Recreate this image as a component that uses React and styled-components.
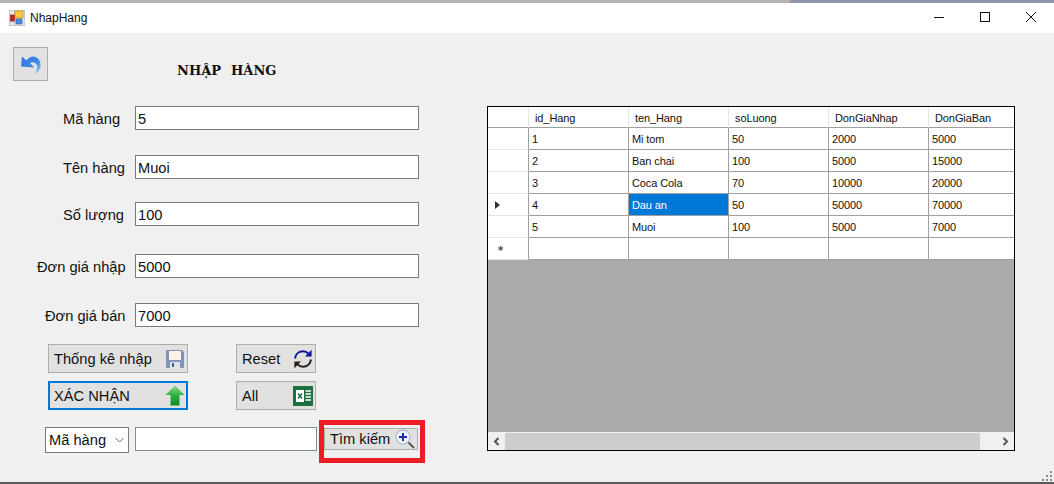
import React from "react";
import styled, { createGlobalStyle } from "styled-components";

const GlobalStyle = createGlobalStyle`
  html, body {
    margin: 0;
    padding: 0;
    background: #f0f0f0;
    overflow: hidden;
  }
  * { box-sizing: border-box; }
`;

const columns = ["id_Hang", "ten_Hang", "soLuong", "DonGiaNhap", "DonGiaBan"];
const rows = [
  ["1", "Mi tom", "50", "2000", "5000"],
  ["2", "Ban chai", "100", "5000", "15000"],
  ["3", "Coca Cola", "70", "10000", "20000"],
  ["4", "Dau an", "50", "50000", "70000"],
  ["5", "Muoi", "100", "5000", "7000"],
];
const fields = [
  { label: "Mã hàng", value: "5", left: 63, top: 0 },
  { label: "Tên hàng", value: "Muoi", left: 63, top: 25 },
  { label: "Số lượng", value: "100", left: 63, top: 23 },
  { label: "Đơn giá nhập", value: "5000", left: 37, top: 28 },
  { label: "Đơn giá bán", value: "7000", left: 45, top: 25 },
];

const AppIcon = () => (
  <svg width="16" height="16" viewBox="0 0 16 16">
    <rect x="0.5" y="0.5" width="15" height="15" fill="#e8e8e8" stroke="#c8c8c8" />
    <path d="M5.5 1 V15 M1 12 H15" stroke="#c8c8c8" />
    <rect x="1.5" y="5" width="4" height="6" fill="#d02020" stroke="#801010" strokeWidth="0.6" />
    <rect x="6" y="1" width="8" height="7" fill="#f8c840" stroke="#b08020" strokeWidth="0.6" />
    <rect x="7" y="9" width="6" height="5" fill="#5088e0" stroke="#2858a8" strokeWidth="0.6" />
  </svg>
);

const BackIcon = () => (
  <svg width="24" height="26" viewBox="0 0 24 26">
    <defs>
      <linearGradient id="backBlue" x1="0" y1="0" x2="1" y2="1">
        <stop offset="0" stopColor="#2a74e2" />
        <stop offset="0.6" stopColor="#3f8ae6" />
        <stop offset="1" stopColor="#a8d4f6" />
      </linearGradient>
    </defs>
    <path d="M3 5.5 L2 15.5 L15.5 16.5 L11 12 C13 10.5 17 11 18 14.5 C18.5 17 17.5 20 16.5 23 C20 20.5 22 17 21.5 13 C21 7.5 14 1.5 7.5 9.5 Z" fill="url(#backBlue)" />
  </svg>
);

const SaveIcon = () => (
  <svg width="20" height="20" viewBox="0 0 20 20">
    <path d="M1 2 Q1 1 2 1 H17 L19 3 V18 Q19 19 18 19 H2 Q1 19 1 18 Z" fill="#7f95b5" />
    <rect x="4" y="2" width="12" height="9" fill="#fdf1ea" />
    <rect x="5" y="13" width="10" height="6" fill="#dfe3ea" />
    <rect x="7" y="14" width="2" height="4" fill="#4a5d7c" />
  </svg>
);

const RefreshIcon = () => (
  <svg width="20" height="20" viewBox="0 0 20 20" fill="none">
    <path d="M2 9.5 C2.6 5 6 2.2 10 2.2 C12.4 2.2 14.2 3.2 15.6 4.8" stroke="#10189a" strokeWidth="2" />
    <path d="M18.6 0.8 V7.6 H12 Z" fill="#10189a" />
    <path d="M18 10.5 C17.4 15 14 17.8 10 17.8 C7.6 17.8 5.8 16.8 4.4 15.2" stroke="#2a2018" strokeWidth="2" />
    <path d="M1.4 19.2 V12.4 H8 Z" fill="#2a2018" />
  </svg>
);

const UpIcon = () => (
  <svg width="20" height="21" viewBox="0 0 20 21">
    <defs>
      <linearGradient id="upGreen" x1="0" y1="0" x2="0" y2="1">
        <stop offset="0" stopColor="#8ad88a" />
        <stop offset="0.5" stopColor="#2cb040" />
        <stop offset="1" stopColor="#108a28" />
      </linearGradient>
    </defs>
    <path d="M10 0.5 L19.5 10 H14.5 V20.5 H5.5 V10 H0.5 Z" fill="url(#upGreen)" />
  </svg>
);

const ExcelIcon = () => (
  <svg width="20" height="20" viewBox="0 0 20 20">
    <rect width="20" height="20" fill="#1d6f42" />
    <rect x="3" y="4" width="8" height="12" fill="#fff" />
    <path d="M12.5 5 H18 M12.5 8 H18 M12.5 11 H18 M12.5 14 H18" stroke="#fff" strokeWidth="1.4" />
    <path d="M5 7.5 L9 12.5 M9 7.5 L5 12.5" stroke="#1d6f42" strokeWidth="1.5" />
  </svg>
);

const SearchIcon = () => (
  <svg width="20" height="20" viewBox="0 0 20 20">
    <path d="M12 12 L19 19" stroke="#555" strokeWidth="2" />
    <circle cx="8" cy="8" r="7" fill="#eef4fd" stroke="#b4c2d4" strokeWidth="1.4" />
    <path d="M8 4 V12 M4 8 H12" stroke="#1c2fb0" strokeWidth="2" />
  </svg>
);

const App = () => (
  <>
    <GlobalStyle />
    <Window>
      <TopEdge />
      <TitleBar>
        <AppIcon />
        <TitleText>NhapHang</TitleText>
        <WindowButtons>
          <WindowButton>
            <svg width="10" height="10" viewBox="0 0 10 10"><path d="M0 5.5 H10" stroke="#111" /></svg>
          </WindowButton>
          <WindowButton>
            <svg width="10" height="10" viewBox="0 0 10 10"><rect x="0.5" y="0.5" width="9" height="9" fill="none" stroke="#111" /></svg>
          </WindowButton>
          <WindowButton>
            <svg width="12" height="12" viewBox="0 0 12 12"><path d="M1 1 L11 11 M11 1 L1 11" stroke="#111" /></svg>
          </WindowButton>
        </WindowButtons>
      </TitleBar>
      <Client>
        <FormPane>
          <Heading>
            <BackButton><BackIcon /></BackButton>
            <HeadingText>NHẬP&nbsp;&nbsp;HÀNG</HeadingText>
          </Heading>
          <Fields>
            {fields.map((f) => (
              <FieldRow key={f.label} $top={f.top}>
                <FieldLabel $left={f.left}>{f.label}</FieldLabel>
                <TextBox readOnly value={f.value} />
              </FieldRow>
            ))}
          </Fields>
          <ButtonGrid>
            <Button><span>Thống kê nhập</span><SaveIcon /></Button>
            <Button><span>Reset</span><RefreshIcon /></Button>
            <Button $focused><span>XÁC NHẬN</span><UpIcon /></Button>
            <Button><span>All</span><ExcelIcon /></Button>
          </ButtonGrid>
          <SearchRow>
            <Select>
              <span>Mã hàng</span>
              <svg width="9" height="6" viewBox="0 0 9 6"><path d="M0.5 1 L4.5 5 L8.5 1" fill="none" stroke="#666" /></svg>
            </Select>
            <SearchBox readOnly value="" />
            <Highlight>
              <SearchButton><span>Tìm kiếm</span><SearchIcon /></SearchButton>
            </Highlight>
          </SearchRow>
        </FormPane>
        <GridPane>
          <Table>
            <HeaderRow>
              <HeadCorner />
              {columns.map((c) => <HeadCell key={c}>{c}</HeadCell>)}
            </HeaderRow>
            {rows.map((r, i) => (
              <DataRow key={r[0]}>
                <RowHead>{i === 3 && <Arrow />}</RowHead>
                {r.map((v, j) => (
                  <Cell key={j} $selected={i === 3 && j === 1}>{v}</Cell>
                ))}
              </DataRow>
            ))}
            <DataRow>
              <RowHead><Star>*</Star></RowHead>
              {columns.map((c) => <Cell key={c} />)}
            </DataRow>
            <Empty />
            <ScrollBar>
              <ScrollArrow>
                <svg width="7" height="9" viewBox="0 0 7 9"><path d="M5.5 1 L2 4.5 L5.5 8" fill="none" stroke="#555" strokeWidth="2" /></svg>
              </ScrollArrow>
              <ScrollTrack><ScrollThumb /></ScrollTrack>
              <ScrollArrow>
                <svg width="7" height="9" viewBox="0 0 7 9"><path d="M1.5 1 L5 4.5 L1.5 8" fill="none" stroke="#555" strokeWidth="2" /></svg>
              </ScrollArrow>
            </ScrollBar>
          </Table>
        </GridPane>
        <Grip>
          <svg width="10" height="10" viewBox="0 0 10 10" fill="#8a8a8a">
            <rect x="8" y="0" width="2" height="2" /><rect x="4" y="4" width="2" height="2" /><rect x="8" y="4" width="2" height="2" />
            <rect x="0" y="8" width="2" height="2" /><rect x="4" y="8" width="2" height="2" /><rect x="8" y="8" width="2" height="2" />
          </svg>
        </Grip>
      </Client>
    </Window>
  </>
);

const Window = styled.div`
  width: 1054px;
  height: 484px;
  display: flex;
  flex-direction: column;
  border-bottom: 2px solid #5a5a5a;
  font-family: "Liberation Sans", Arial, sans-serif;
  color: #111;
`;

const TopEdge = styled.div`
  height: 3px;
  flex-shrink: 0;
  background: linear-gradient(90deg, #b4b4b4 0, #b4b4b4 790px, #8f96a8 790px);
`;

const TitleBar = styled.div`
  height: 30px;
  background: #fff;
  display: flex;
  align-items: center;
  padding-left: 9px;
  flex-shrink: 0;
`;

const TitleText = styled.div`
  font-size: 12px;
  margin-left: 5px;
`;

const WindowButtons = styled.div`
  margin-left: auto;
  display: flex;
`;

const WindowButton = styled.div`
  width: 46px;
  height: 30px;
  padding-bottom: 2px;
  display: flex;
  align-items: center;
  justify-content: center;
`;

const Client = styled.div`
  position: relative;
  flex: 1;
  background: #f0f0f0;
  display: flex;
`;

const FormPane = styled.div`
  width: 487px;
  flex-shrink: 0;
  padding-top: 14px;
`;

const Heading = styled.div`
  display: flex;
  padding-left: 13px;
  height: 59px;
`;

const BackButton = styled.div`
  width: 35px;
  height: 34px;
  background: #e1e1e1;
  border: 1px solid #adadad;
  display: flex;
  align-items: center;
  justify-content: center;
`;

const HeadingText = styled.div`
  font-family: "DejaVu Serif", "Liberation Serif", serif;
  font-weight: bold;
  font-size: 13px;
  word-spacing: 0.5px;
  margin-left: 129px;
  margin-top: 16px;
  color: #111;
  white-space: nowrap;
`;

const Fields = styled.div`
  display: flex;
  flex-direction: column;
`;

const FieldRow = styled.div`
  display: grid;
  grid-template-columns: 135px 284px;
  align-items: center;
  height: 24px;
  margin-top: ${(p) => p.$top}px;
`;

const FieldLabel = styled.div`
  padding: 2px 0 0 ${(p) => p.$left}px;
  font-size: 14.67px;
  white-space: nowrap;
`;

const TextBox = styled.input`
  width: 284px;
  height: 24px;
  border: 1px solid #7a7a7a;
  background: #fff;
  font: 14.67px "Liberation Sans", Arial, sans-serif;
  color: #111;
  padding: 2px 2px 0;
  outline: none;
`;

const ButtonGrid = styled.div`
  display: grid;
  grid-template-columns: 140px 80px;
  grid-auto-rows: 29px;
  column-gap: 48px;
  row-gap: 8px;
  margin: 17px 0 0 48px;
`;

const Button = styled.div`
  display: flex;
  align-items: center;
  justify-content: space-between;
  background: #e1e1e1;
  border: ${(p) => (p.$focused ? "2px solid #0078d7" : "1px solid #adadad")};
  padding: 0 ${(p) => (p.$focused ? 1 : 2)}px 0 ${(p) => (p.$focused ? 4 : 5)}px;
  font-size: 14.67px;
  white-space: nowrap;
`;

const SearchRow = styled.div`
  display: flex;
  margin: 10px 0 0 45px;
  align-items: flex-start;
`;

const Select = styled.div`
  width: 84px;
  height: 26px;
  margin-top: 7px;
  border: 1px solid #7a7a7a;
  background: #fff;
  display: flex;
  align-items: center;
  justify-content: space-between;
  padding: 0 4px 0 3px;
  font-size: 14.67px;
`;

const SearchBox = styled(TextBox)`
  width: 182px;
  margin: 7px 0 0 6px;
  border-color: #8a8a8a;
`;

const Highlight = styled.div`
  width: 106px;
  height: 43px;
  margin-left: 2px;
  border: 5px solid #ed1c24;
  padding: 3px 0 0 0;
  flex-shrink: 0;
`;

const SearchButton = styled.div`
  width: 94px;
  height: 22px;
  background: #e1e1e1;
  border: 1px solid #adadad;
  display: flex;
  align-items: center;
  justify-content: space-between;
  padding: 0 2px 0 5px;
  font-size: 14.67px;
  white-space: nowrap;
`;

const GridPane = styled.div`
  padding-top: 73px;
`;

const Table = styled.div`
  width: 528px;
  height: 345px;
  border: 1px solid #000;
  background: #ababab;
  display: flex;
  flex-direction: column;
  overflow: hidden;
  font-size: 11px;
  letter-spacing: -0.1px;
  position: relative;
`;

const HeaderRow = styled.div`
  display: grid;
  grid-template-columns: 41px repeat(5, 100px);
  height: 21px;
  background: #fff;
  flex-shrink: 0;
`;

const HeadCorner = styled.div`
  border-right: 1px solid #e4e4e4;
  border-bottom: 1px solid #a0a0a0;
`;

const HeadCell = styled.div`
  border-right: 1px solid #e4e4e4;
  border-bottom: 1px solid #a0a0a0;
  padding: 5px 0 0 6px;
  white-space: nowrap;
`;

const DataRow = styled.div`
  display: grid;
  grid-template-columns: 41px repeat(5, 100px);
  height: 22px;
  background: #fff;
  flex-shrink: 0;
`;

const RowHead = styled.div`
  border-right: 1px solid #a0a0a0;
  border-bottom: 1px solid #e4e4e4;
  display: flex;
  align-items: center;
  padding-left: 7px;
`;

const Arrow = styled.div`
  width: 0;
  height: 0;
  border-top: 4px solid transparent;
  border-bottom: 4px solid transparent;
  border-left: 5px solid #333;
`;

const Star = styled.span`
  font-size: 13px;
  font-weight: bold;
  color: #555;
  line-height: 13px;
  padding-top: 4px;
  margin-left: 3px;
`;

const Cell = styled.div`
  border-right: 1px solid #a0a0a0;
  border-bottom: 1px solid #a0a0a0;
  padding: 5px 0 0 3px;
  white-space: nowrap;
  background: ${(p) => (p.$selected ? "#0078d7" : "#fff")};
  color: ${(p) => (p.$selected ? "#fff" : "#111")};
`;

const Empty = styled.div`
  flex: 1;
  background: #ababab;
`;

const ScrollBar = styled.div`
  height: 18px;
  background: #f0f0f0;
  border-top: 1px solid #f0f0f0;
  display: flex;
  flex-shrink: 0;
`;

const ScrollArrow = styled.div`
  width: 17px;
  display: flex;
  align-items: center;
  justify-content: center;
`;

const ScrollTrack = styled.div`
  flex: 1;
  padding-right: 17px;
`;

const ScrollThumb = styled.div`
  height: 100%;
  background: #cdcdcd;
`;

const Grip = styled.div`
  position: absolute;
  right: 2px;
  bottom: 1px;
  line-height: 0;
`;

export default App;
